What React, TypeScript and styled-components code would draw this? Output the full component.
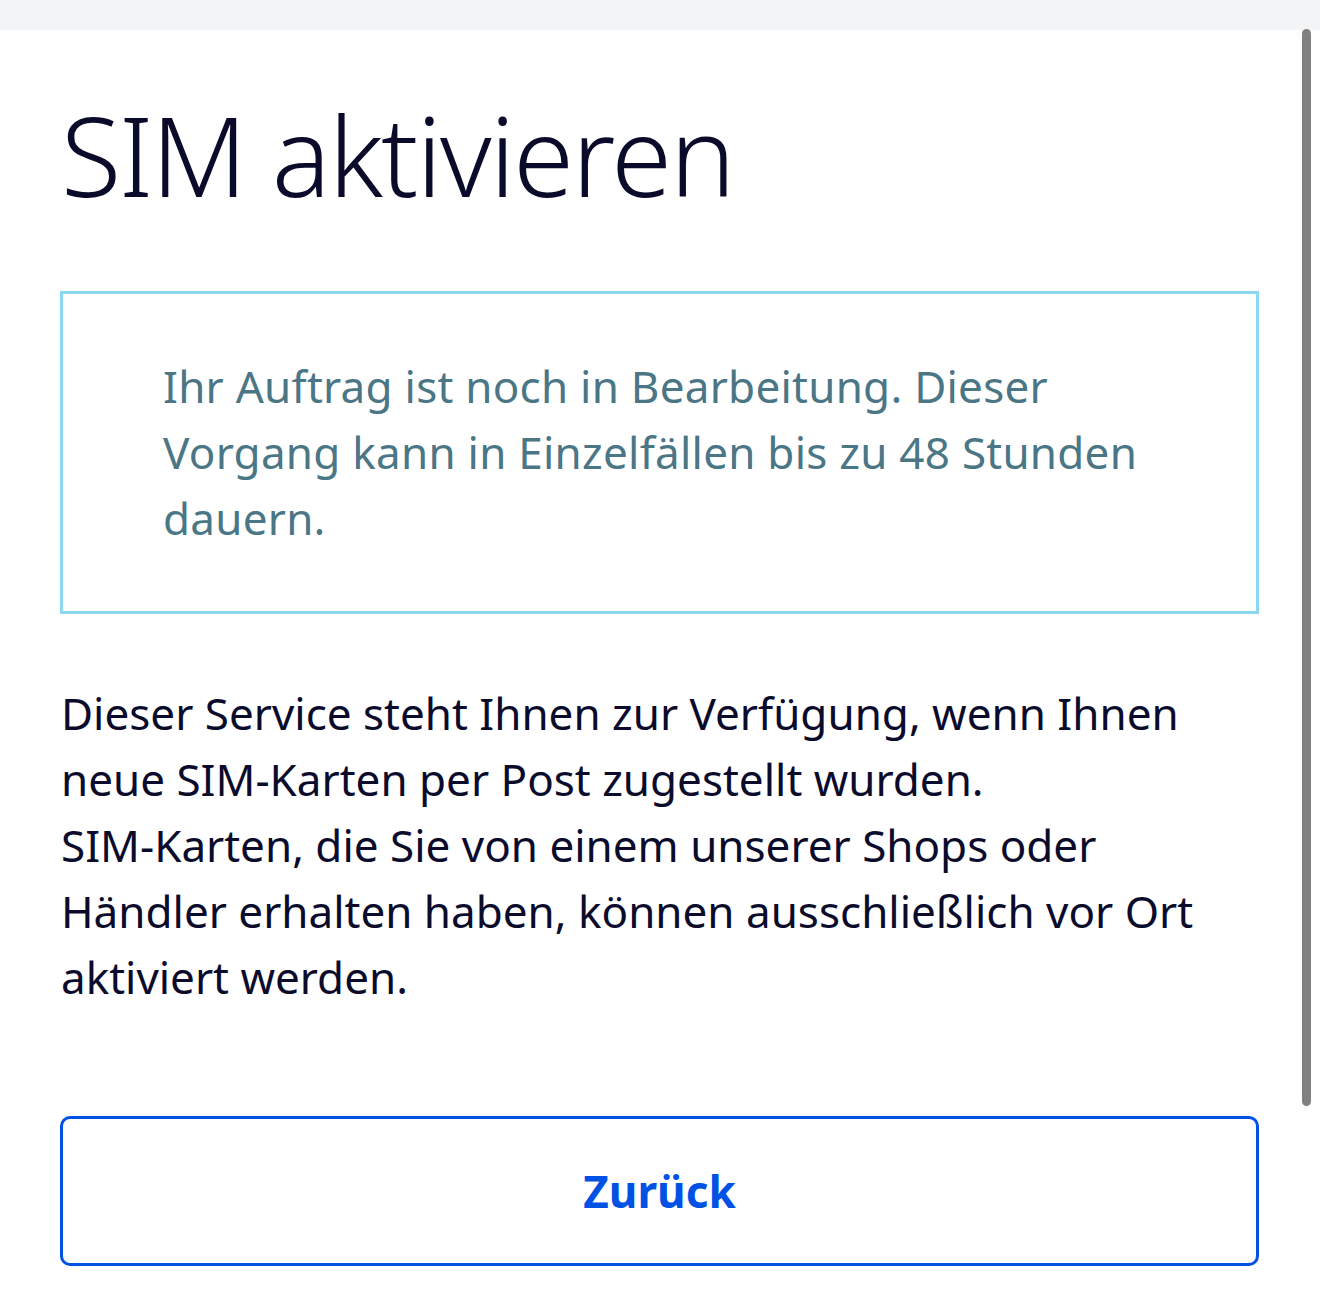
import React from 'react';
import styled, { createGlobalStyle } from 'styled-components';

const GlobalStyle = createGlobalStyle`
  html, body {
    margin: 0;
    padding: 0;
    background: #ffffff;
  }
  body {
    font-family: "Noto Sans", "Liberation Sans", sans-serif;
    font-variant-ligatures: none;
    color: #0b0b2c;
    overflow: hidden;
  }
`;

const TopBar = styled.div`
  height: 30px;
  background-color: #f3f4f6;
`;

const Page = styled.main`
  position: relative;
  padding: 0 61px 40px 60px;
`;

const Title = styled.h1`
  margin: 0;
  padding: 64px 0 76px 1px;
  font-size: 110px;
  font-weight: 300;
  letter-spacing: -2px;
  line-height: 1.1;
  color: #0a0a2a;
`;

const InfoBox = styled.div`
  border: 3px solid #8dd8f0;
  padding: 59px 100px 60px 100px;
`;

const InfoText = styled.p`
  margin: 0;
  font-size: 44px;
  line-height: 66px;
  letter-spacing: 0.25px;
  color: #4a7686;
`;

const BodyText = styled.p`
  margin: 66px 0 106px 1px;
  font-size: 44px;
  line-height: 66px;
  color: #0b0b2c;
`;

const BackButton = styled.button`
  display: block;
  width: 100%;
  height: 150px;
  background: #ffffff;
  border: 3px solid #0052e5;
  border-radius: 10px;
  color: #0052e5;
  font-family: inherit;
  font-size: 44px;
  font-weight: 700;
  cursor: pointer;
`;

const ScrollThumb = styled.div`
  position: fixed;
  top: 29px;
  left: 1302px;
  width: 9px;
  height: 1077px;
  border-radius: 5px;
  background-color: #808080;
`;

const App: React.FC = () => {
  return (
    <>
      <GlobalStyle />
      <TopBar />
      <Page>
        <Title>SIM aktivieren</Title>
        <InfoBox>
          <InfoText>
            Ihr Auftrag ist noch in Bearbeitung. Dieser Vorgang kann in Einzelfällen bis zu 48 Stunden dauern.
          </InfoText>
        </InfoBox>
        <BodyText>
          Dieser Service steht Ihnen zur Verfügung, wenn Ihnen neue SIM-Karten per Post zugestellt wurden.
          <br />
          SIM-Karten, die Sie von einem unserer Shops oder Händler erhalten haben, können ausschließlich vor Ort
          aktiviert werden.
        </BodyText>
        <BackButton>Zurück</BackButton>
      </Page>
      <ScrollThumb />
    </>
  );
};

export default App;
